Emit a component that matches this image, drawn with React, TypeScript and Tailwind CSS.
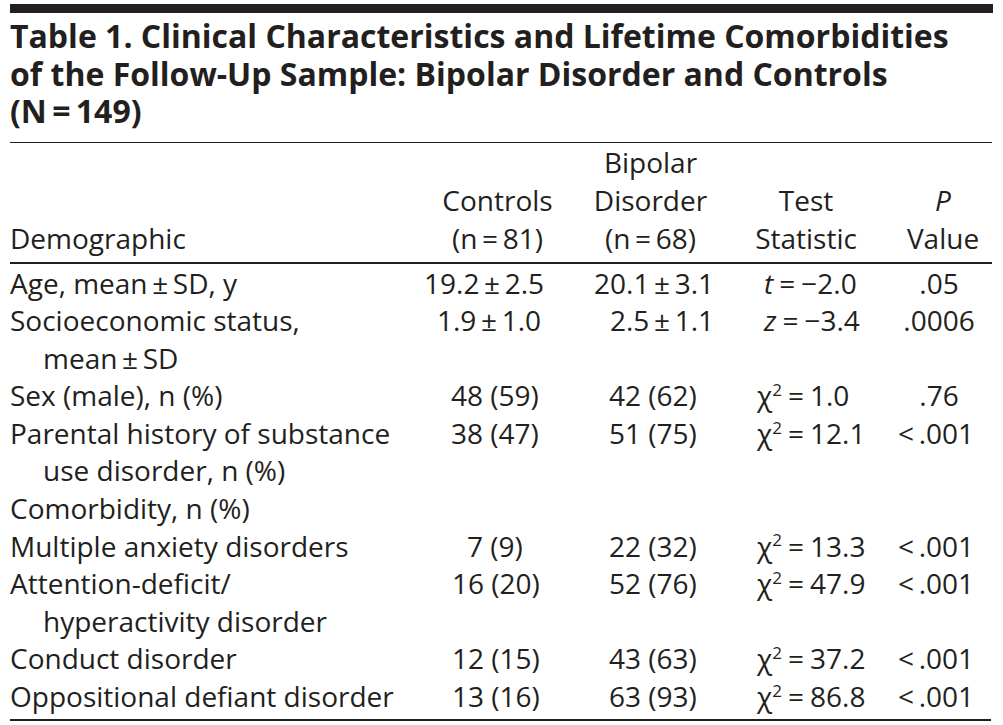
import React from "react";

type Cell = { v: React.ReactNode; c: string };
type Row = { label: React.ReactNode[]; cells?: Cell[] };

const T = "\u2009";
const Eq = () => <span className="mx-[6px]">=</span>;
const Chi = ({ n }: { n: string }) => (
  <>
    χ<sup className="text-[17px] top-[-0.6em]">2</sup>
    <Eq />
    {n}
  </>
);
const LT = <>&lt;{T}.001</>;
const P = "text-center pl-[24px] pr-[8px]";

const rows: Row[] = [
  {
    label: ["Age, mean\u2009±\u2009SD, y"],
    cells: [
      { v: <>19.2{T}±{T}2.5</>, c: "pl-[4px]" },
      { v: <>20.1{T}±{T}3.1</>, c: "pl-[14px]" },
      { v: <><i>t</i><Eq />−2.0</>, c: "pl-[19px]" },
      { v: ".05", c: P },
    ],
  },
  {
    label: ["Socioeconomic status,", "mean\u2009±\u2009SD"],
    cells: [
      { v: <>1.9{T}±{T}1.0</>, c: "pl-[17px]" },
      { v: <>2.5{T}±{T}1.1</>, c: "pl-[30px]" },
      { v: <><i>z</i><Eq />−3.4</>, c: "pl-[19px]" },
      { v: ".0006", c: P },
    ],
  },
  {
    label: ["Sex (male), n (%)"],
    cells: [
      { v: "48 (59)", c: "pl-[31px]" },
      { v: "42 (62)", c: "pl-[29px]" },
      { v: <Chi n="1.0" />, c: "pl-[12px]" },
      { v: ".76", c: P },
    ],
  },
  {
    label: ["Parental history of substance", "use disorder, n (%)"],
    cells: [
      { v: "38 (47)", c: "pl-[31px]" },
      { v: "51 (75)", c: "pl-[29px]" },
      { v: <Chi n="12.1" />, c: "pl-[12px]" },
      { v: LT, c: "pl-[28px]" },
    ],
  },
  { label: ["Comorbidity, n (%)"] },
  {
    label: ["Multiple anxiety disorders"],
    cells: [
      { v: "7 (9)", c: "pl-[47px]" },
      { v: "22 (32)", c: "pl-[29px]" },
      { v: <Chi n="13.3" />, c: "pl-[12px]" },
      { v: LT, c: "pl-[28px]" },
    ],
  },
  {
    label: ["Attention-deficit/", "hyperactivity disorder"],
    cells: [
      { v: "16 (20)", c: "pl-[32px]" },
      { v: "52 (76)", c: "pl-[29px]" },
      { v: <Chi n="47.9" />, c: "pl-[12px]" },
      { v: LT, c: "pl-[28px]" },
    ],
  },
  {
    label: ["Conduct disorder"],
    cells: [
      { v: "12 (15)", c: "pl-[32px]" },
      { v: "43 (63)", c: "pl-[29px]" },
      { v: <Chi n="37.2" />, c: "pl-[12px]" },
      { v: LT, c: "pl-[28px]" },
    ],
  },
  {
    label: ["Oppositional defiant disorder"],
    cells: [
      { v: "13 (16)", c: "pl-[32px]" },
      { v: "63 (93)", c: "pl-[29px]" },
      { v: <Chi n="86.8" />, c: "pl-[12px]" },
      { v: LT, c: "pl-[28px]" },
    ],
  },
];

const grid = "grid grid-cols-[410px_160px_165px_125px_122px]";

export default function App() {
  return (
    <div className="w-[1003px] h-[725px] bg-white text-[#231f20] font-['Open_Sans',sans-serif] pt-[4px] pl-[10px]">
      <div className="w-[983px]">
        <div className="h-[9px] bg-[#231f20]" />
        <h1 className="mt-[4px] font-bold text-[32px] leading-[37.5px]">
          Table 1. Clinical Characteristics and Lifetime Comorbidities
          <br />
          of the Follow-Up Sample: Bipolar Disorder and Controls
          <br />
          (N{T}={T}149)
        </h1>
        <div className="mt-[12px] h-[1.5px] bg-[#231f20] w-[982px]" />
        <div className="text-[28px] leading-[38px] w-[982px]">
          <div className={`${grid} items-end pb-[5px]`}>
            <div>Demographic</div>
            <div className="text-center pr-[5px]">
              Controls
              <br />
              (n{T}={T}81)
            </div>
            <div className="text-center pr-[24px]">
              Bipolar
              <br />
              Disorder
              <br />
              (n{T}={T}68)
            </div>
            <div className="text-center pr-[3px]">
              Test
              <br />
              Statistic
            </div>
            <div className="text-center pl-[24px]">
              <i>P</i>
              <br />
              Value
            </div>
          </div>
          <div className="h-[1.5px] bg-[#231f20]" />
          <div className="pt-[1px] leading-[37.6px]">
            {rows.map((r, i) => (
              <div key={i} className={grid}>
                <div>
                  {r.label.map((l, j) => (
                    <div key={j} className={j > 0 ? "pl-[33px]" : ""}>
                      {l}
                    </div>
                  ))}
                </div>
                {r.cells
                  ? r.cells.map((c, j) => (
                      <div key={j} className={`${c.c} whitespace-nowrap`}>
                        {c.v}
                      </div>
                    ))
                  : null}
              </div>
            ))}
          </div>
          <div className="mt-[3px] h-[2px] bg-[#231f20] w-[981px]" />
        </div>
      </div>
    </div>
  );
}
